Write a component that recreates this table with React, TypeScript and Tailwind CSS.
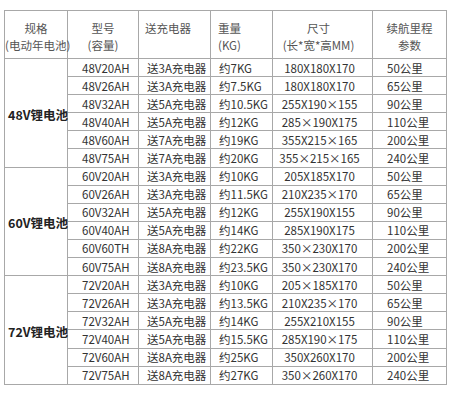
import React from "react";

interface IRow {
  model: string;
  charger: string;
  weight: string;
  size: string;
  range: string;
}

interface IGroup {
  label: string;
  rows: IRow[];
}

const groups: IGroup[] = [
  {
    label: "48V锂电池",
    rows: [
      { model: "48V20AH", charger: "送3A充电器", weight: "约7KG", size: "180X180X170", range: "50公里" },
      { model: "48V26AH", charger: "送3A充电器", weight: "约7.5KG", size: "180X180X170", range: "65公里" },
      { model: "48V32AH", charger: "送5A充电器", weight: "约10.5KG", size: "255X190×155", range: "90公里" },
      { model: "48V40AH", charger: "送5A充电器", weight: "约12KG", size: "285×190X175", range: "110公里" },
      { model: "48V60AH", charger: "送7A充电器", weight: "约19KG", size: "355X215×165", range: "200公里" },
      { model: "48V75AH", charger: "送7A充电器", weight: "约20KG", size: "355×215×165", range: "240公里" },
    ],
  },
  {
    label: "60V锂电池",
    rows: [
      { model: "60V20AH", charger: "送3A充电器", weight: "约10KG", size: "205X185X170", range: "50公里" },
      { model: "60V26AH", charger: "送3A充电器", weight: "约11.5KG", size: "210X235×170", range: "65公里" },
      { model: "60V32AH", charger: "送5A充电器", weight: "约12KG", size: "255X190X155", range: "90公里" },
      { model: "60V40AH", charger: "送5A充电器", weight: "约14KG", size: "285X190X175", range: "110公里" },
      { model: "60V60TH", charger: "送8A充电器", weight: "约22KG", size: "350×230X170", range: "200公里" },
      { model: "60V75AH", charger: "送8A充电器", weight: "约23.5KG", size: "350×230X170", range: "240公里" },
    ],
  },
  {
    label: "72V锂电池",
    rows: [
      { model: "72V20AH", charger: "送3A充电器", weight: "约10KG", size: "205×185X170", range: "50公里" },
      { model: "72V26AH", charger: "送3A充电器", weight: "约13.5KG", size: "210X235×170", range: "65公里" },
      { model: "72V32AH", charger: "送5A充电器", weight: "约14KG", size: "255X210X155", range: "90公里" },
      { model: "72V40AH", charger: "送5A充电器", weight: "约15.5KG", size: "285X190×175", range: "110公里" },
      { model: "72V60AH", charger: "送8A充电器", weight: "约25KG", size: "350X260X170", range: "200公里" },
      { model: "72V75AH", charger: "送8A充电器", weight: "约27KG", size: "350×260X170", range: "240公里" },
    ],
  },
];

const cell = "border border-[#a8a8a8] p-0 leading-[16px] whitespace-nowrap";
const head = "border border-[#a8a8a8] p-0 pt-[9px] align-top leading-[17px] font-normal whitespace-nowrap";

const App = () => {
  return (
    <div className="w-[450px] h-[400px] bg-white pt-[10px] pl-[4px] text-[11.5px] text-[#333] [font-family:'Noto_Sans_CJK_SC','Noto_Sans',sans-serif]">
      <table className="table-fixed w-[442px] border-collapse border border-[#9a9a9a]">
        <colgroup>
          <col className="w-[63px]" />
          <col className="w-[71px]" />
          <col className="w-[72px]" />
          <col className="w-[62px]" />
          <col className="w-[100px]" />
          <col className="w-[74px]" />
        </colgroup>
        <thead>
          <tr className="h-[48px] text-[#555]">
            <th className={`${head} text-center`}>
              规格
              <br />
              (电动年电池)
            </th>
            <th className={`${head} text-center`}>
              型号
              <br />
              (容量)
            </th>
            <th className={`${head} text-left pl-[6px]`}>送充电器</th>
            <th className={`${head} text-left pl-[7px]`}>
              重量
              <br />
              (KG)
            </th>
            <th className={`${head} text-center pr-[8px]`}>
              尺寸
              <br />
              (长*宽*高MM)
            </th>
            <th className={`${head} text-center`}>
              续航里程
              <br />
              参数
            </th>
          </tr>
        </thead>
        <tbody>
          {groups.map((group) =>
            group.rows.map((row, i) => (
              <tr key={row.model} className="h-[18.1px]">
                {i === 0 && (
                  <td
                    rowSpan={group.rows.length}
                    className={`${cell} text-left pl-[3px] pt-[4px] font-bold text-[12.5px] text-[#222]`}
                  >
                    {group.label}
                  </td>
                )}
                <td className={`${cell} pl-[14px]`}>{row.model}</td>
                <td className={`${cell} pl-[8px]`}>{row.charger}</td>
                <td className={`${cell} pl-[8px]`}>{row.weight}</td>
                <td className={`${cell} text-center pr-[6px]`}>{row.size}</td>
                <td className={`${cell} pl-[14px]`}>{row.range}</td>
              </tr>
            ))
          )}
        </tbody>
      </table>
    </div>
  );
};

export default App;
